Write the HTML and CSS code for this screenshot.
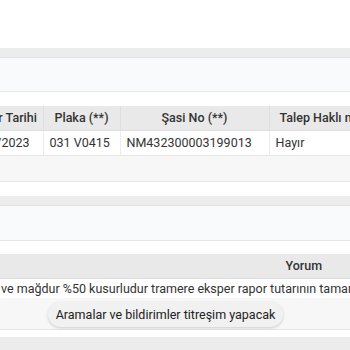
FILE: index.html
```html
<!DOCTYPE html>
<html lang="tr">
<head>
<meta charset="utf-8">
<link rel="stylesheet" href="styles.css">
</head>
<body>
<div class="page">
  <div class="top-space"></div>

  <section class="panel">
    <div class="panel-band"></div>
    <div class="panel-body"></div>
    <div class="gap"></div>
    <div class="scroller">
      <table class="grid grid-vehicle">
        <thead>
          <tr>
            <th class="c-date">Hasar Tarihi</th>
            <th class="c-plate">Plaka (**)</th>
            <th class="c-chassis">Şasi No (**)</th>
            <th class="c-claim">Talep Haklı mı?</th>
          </tr>
        </thead>
        <tbody>
          <tr>
            <td class="c-date">12/07/2023</td>
            <td class="c-plate">031 V0415</td>
            <td class="c-chassis">NM432300003199013</td>
            <td class="c-claim">Hayır</td>
          </tr>
        </tbody>
      </table>
    </div>
    <div class="grid-footer"></div>
    <div class="gap"></div>
  </section>

  <section class="panel">
    <div class="panel-band"></div>
    <div class="panel-body panel-body-2"></div>
    <div class="gap gap-2"></div>
    <div class="scroller">
      <table class="grid grid-comment">
        <thead><tr><th class="c-comment">Yorum</th></tr></thead>
        <tbody>
          <tr><td class="c-comment">ve mağdur %50 kusurludur tramere eksper rapor tutarının tamamı ödenmiştir</td></tr>
        </tbody>
      </table>
    </div>
    <div class="grid-footer grid-footer-2"></div>
    <div class="gap gap-3"></div>
    <div class="panel-band panel-band-bottom"></div>
  </section>

  <div class="toast">Aramalar ve bildirimler titreşim yapacak</div>
</div>
</body>
</html>
```

FILE: styles.css
```css
html, body {
  margin: 0;
  padding: 0;
  background: #ffffff;
}

.page {
  position: relative;
  width: 350px;
  height: 350px;
  overflow: hidden;
  font-family: Roboto, "Liberation Sans", sans-serif;
  font-size: 12.5px;
  color: #333333;
}

.top-space {
  height: 48px;
}

.panel-band {
  height: 9px;
  background: #ececec;
  border-bottom: 1px solid #e2e2e2;
}

.panel-body {
  height: 33px;
  background: #f9fafc;
  border-bottom: 1px solid #e6e6e6;
}

.panel-body-2 {
  height: 34px;
}

.gap {
  height: 14px;
}

.gap-2 {
  height: 13px;
}

.gap-3 {
  height: 7px;
}

.panel-band-bottom {
  height: 14px;
  border-bottom: none;
}

.scroller {
  overflow: hidden;
  width: 350px;
}

.grid {
  border-collapse: collapse;
  table-layout: fixed;
  white-space: nowrap;
}

.grid th,
.grid td {
  box-sizing: border-box;
  overflow: hidden;
}

.grid th {
  background: #e9e9e9;
  font-weight: 500;
  text-align: center;
  height: 24px;
  padding: 0 4px;
  border-right: 1px solid #dedede;
  border-bottom: 1px solid #dedede;
  color: #333333;
}

.grid td {
  height: 25px;
  padding: 0 6px;
  text-align: left;
  border-right: 1px solid #ececec;
  border-bottom: 1px solid #e6e6e6;
  background: #ffffff;
}

.grid-vehicle {
  width: 437px;
  margin-left: -48px;
}

.c-date { width: 91px; }
.c-plate { width: 77px; }
.c-chassis { width: 149px; }
.c-claim { width: 120px; }

.grid-vehicle th.c-date {
  padding-left: 12px;
  padding-right: 0;
}

.grid-vehicle td.c-date { padding-left: 11px; }

.grid-vehicle th.c-claim {
  text-align: left;
  padding-left: 10px;
}

.grid-comment {
  width: 618px;
  margin-left: -5px;
}

.grid-comment th {
  height: 25px;
}

.grid-comment td {
  height: 19px;
  border-bottom: none;
}

.c-comment { width: 618px; }

.grid-footer {
  height: 25px;
  background: #f7f7f7;
  border-bottom: 1px solid #e5e5e5;
}

.grid-footer-2 {
  height: 31px;
}

.toast {
  position: absolute;
  left: 48px;
  top: 302px;
  width: 235px;
  height: 25px;
  line-height: 25px;
  border-radius: 13px;
  background: #f1f1f1;
  box-shadow: 0 1px 3px rgba(0, 0, 0, 0.18);
  text-align: center;
  font-size: 12.5px;
  color: #222222;
  white-space: nowrap;
}
```
